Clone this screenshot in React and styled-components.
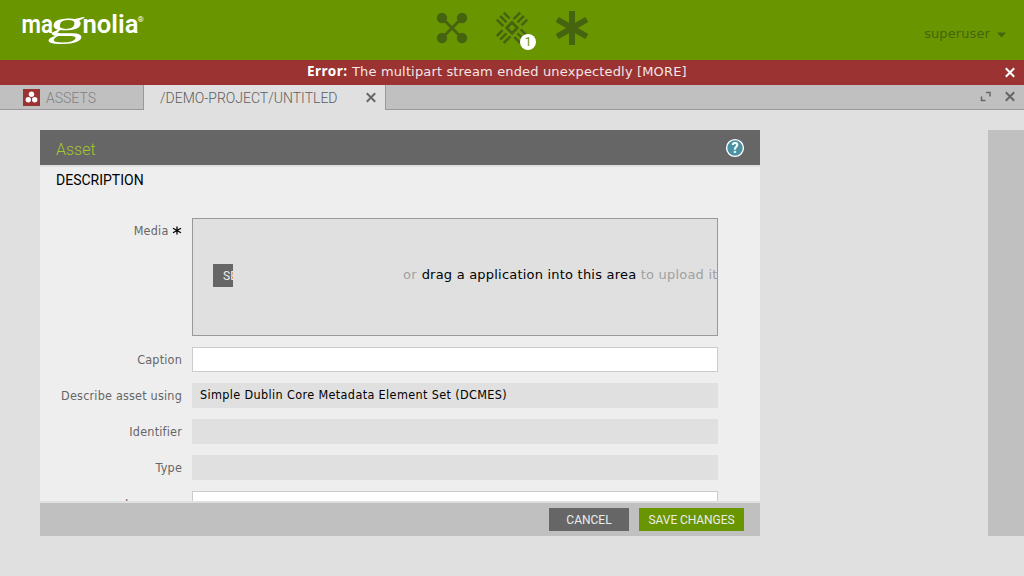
import React from "react";
import styled, { createGlobalStyle } from "styled-components";

const verdana = `"DejaVu Sans", sans-serif`;
const tahoma = `"DejaVu Sans Condensed", "DejaVu Sans", sans-serif`;
const din = `Roboto, "Liberation Sans", sans-serif`;

const GlobalStyle = createGlobalStyle`
  * { box-sizing: border-box; }
  body { margin: 0; background: #e0e0e0; overflow: hidden; }
`;

const Shell = styled.div`
  display: flex;
  flex-direction: column;
  width: 1024px;
  height: 576px;
  overflow: hidden;
  background: #e0e0e0;
  font-family: ${verdana};
`;

const Header = styled.header`
  display: grid;
  grid-template-columns: 1fr 156px 1fr;
  height: 60px;
  flex: none;
  background: #699600;
  color: #466410;
`;

const Launchers = styled.nav`
  display: flex;
  justify-content: space-between;
  padding-top: 10px;
`;

const Launcher = styled.div`
  position: relative;
  width: 36px;
  height: 36px;
  svg { display: block; }
`;

const Badge = styled.span`
  position: absolute;
  left: 26px;
  top: 24px;
  width: 16px;
  height: 16px;
  border-radius: 50%;
  background: #fff;
  color: #699600;
  font: 400 12px/16px ${din};
  text-align: center;
`;

const User = styled.div`
  display: flex;
  justify-content: flex-end;
  align-items: center;
  gap: 7px;
  padding: 8px 18px 0 0;
  svg { margin-top: 2px; }
`;

const Message = styled.div`
  display: flex;
  align-items: center;
  height: 25px;
  flex: none;
  padding: 0 9px 1px 307px;
  background: #9a3332;
  color: #f2e6e6;
  white-space: nowrap;
  > svg { margin: 0 0 0 auto; }
`;

const ErrorTag = styled.strong`
  width: 45px;
  margin-top: -2px;
  color: #fff;
  font: 700 13.5px/16px "Noto Sans", sans-serif;
  letter-spacing: 0.5px;
`;

const Line = styled.span`
  font-family: ${(p) => p.$font || verdana};
  font-size: ${(p) => p.$size}px;
  font-weight: ${(p) => p.$weight || 400};
  letter-spacing: ${(p) => p.$track || 0}px;
  line-height: 16px;
  white-space: nowrap;
`;

const Tabs = styled.div`
  display: flex;
  height: 25px;
  flex: none;
  background: #c0c0c0;
  color: #666;
`;

const Tab = styled.div`
  display: flex;
  align-items: center;
  width: ${(p) => p.$width}px;
  padding: ${(p) => (p.$active ? "1px 9px 0 16px" : "1px 0 0 23px")};
  gap: 6px;
  background: ${(p) => (p.$active ? "#e0e0e0" : "#c0c0c0")};
  color: ${(p) => (p.$active ? "#5c5c5c" : "#808080")};
  border-right: 1px solid #999;
  border-bottom: ${(p) => (p.$active ? "none" : "1px solid #999")};
  > svg:last-child { margin: -2px 0 0 auto; }
`;

const TabTools = styled.div`
  display: flex;
  flex: 1;
  align-items: center;
  justify-content: flex-end;
  gap: 13px;
  padding: 0 9px 1px 0;
  border-bottom: 1px solid #999;
`;

const Workspace = styled.main`
  display: flex;
  justify-content: space-between;
  height: 426px;
  padding: 20px 0 0 40px;
`;

const Dialog = styled.section`
  display: flex;
  flex-direction: column;
  gap: 2px;
  width: 720px;
`;

const DialogHeader = styled.div`
  display: flex;
  align-items: center;
  justify-content: space-between;
  height: 35px;
  flex: none;
  padding: 1px 15px 0 16px;
  background: #666;
  color: #a7c72c;
  > span { padding-top: 3px; }
`;

const Body = styled.div`
  flex: 1;
  min-height: 0;
  overflow: hidden;
  background: #eee;
`;

const SectionTitle = styled.h2`
  display: flex;
  margin: 0;
  height: 51px;
  padding: 5px 16px 0;
  color: #000;
`;

const Field = styled.div`
  display: flex;
  gap: 10px;
  margin-bottom: 11px;
`;

const Label = styled.label`
  display: flex;
  justify-content: flex-end;
  align-items: center;
  gap: 3.5px;
  width: 142px;
  height: 25px;
  color: #666;
`;

const Input = styled.div`
  display: flex;
  width: 526px;
  height: 25px;
  padding: ${(p) => (p.$disabled ? "4px 8px" : "3px 7px")};
  background: ${(p) => (p.$disabled ? "#e0e0e0" : "#fff")};
  border: ${(p) => (p.$disabled ? "none" : "1px solid #ccc")};
  color: #000;
`;

const DropZone = styled.div`
  display: flex;
  align-items: center;
  width: 526px;
  height: 118px;
  padding-left: 20px;
  border: 1px solid #999;
  background: #e0e0e0;
  overflow: hidden;
`;

const SelectButton = styled.div`
  display: flex;
  flex: none;
  width: 20px;
  height: 23px;
  margin: -3px 170px 0 0;
  padding: 4px 0 0 10px;
  overflow: hidden;
  background: #666;
  color: #eee;
`;

const Hint = styled.div`
  display: flex;
  margin-top: -5px;
  color: #a0a0a0;
  b { color: #000; font-weight: 400; margin-left: 0.6px; }
`;

const Footer = styled.div`
  display: flex;
  align-items: center;
  justify-content: flex-end;
  gap: 10px;
  height: 33px;
  flex: none;
  padding-right: 16px;
  background: #c0c0c0;
`;

const Button = styled.button`
  display: flex;
  align-items: center;
  justify-content: center;
  width: ${(p) => p.$width}px;
  height: 23px;
  padding: 1px 0 0;
  border: 0;
  background: ${(p) => (p.$primary ? "#699600" : "#666")};
  color: #ececec;
`;

const SidePanel = styled.aside`
  width: 36px;
  background: #c0c0c0;
`;

const Cross = ({ color }) => (
  <svg width="11" height="11" viewBox="0 0 11 11">
    <path d="M1.8 1.3l8.4 8.4M10.2 1.3L1.8 9.7" stroke={color} strokeWidth="2" />
  </svg>
);

const Logo = () => (
  <svg width="160" height="60" fill="#fff" fontFamily="Roboto, sans-serif" fontWeight="700">
    <text x="21.5" y="33" fontSize="26" fontWeight="600" textLength="31.5" lengthAdjust="spacingAndGlyphs">ma</text>
    <text transform="translate(46.5 36.3) skewX(-14) scale(1.98 1)" fontFamily="Liberation Serif, serif" fontWeight="400" fontSize="37">g</text>
    <text x="82.5" y="33" fontSize="26" fontWeight="600" textLength="56" lengthAdjust="spacingAndGlyphs">nolia</text>
    <text x="137.5" y="21.5" fontSize="8" fontWeight="400">®</text>
  </svg>
);

const AppsIcon = () => (
  <svg width="36" height="36" fill="#466410">
    <path d="M8 8l20 20M28 8L8 28" stroke="#466410" strokeWidth="3" />
    <circle cx="8" cy="8" r="5.2" />
    <circle cx="28" cy="8" r="5.2" />
    <circle cx="8" cy="28" r="5.2" />
    <circle cx="28" cy="28" r="5.2" />
  </svg>
);

const PulseIcon = () => (
  <svg width="36" height="36" fill="none" stroke="#466410">
    <path d="M18 12.4L23.4 17.8L18 23.2L12.6 17.8Z" strokeWidth="2.8" />
    {[0, 90, 180, 270].map((angle) => (
      <path
        key={angle}
        transform={`rotate(${angle} 18 17.8)`}
        d="M2.8 9.6l6.6 6.6M6.1 5.9l6.4 6.4M9.8 2.6l5.8 5.8"
        strokeWidth="2.5"
      />
    ))}
  </svg>
);

const AsteriskIcon = () => (
  <svg width="36" height="36" stroke="#466410" strokeWidth="6">
    <path d="M18 1v34M3.2 9.5l29.6 17M32.8 9.5l-29.6 17" />
  </svg>
);

const AssetsIcon = () => (
  <svg width="17" height="17">
    <path fill="#9a3332" d="M0 0h17v17H0z" />
    <g fill="#fff">
      <circle cx="8.5" cy="5.3" r="2.7" />
      <circle cx="5.3" cy="10.8" r="2.7" />
      <circle cx="11.7" cy="10.8" r="2.7" />
    </g>
  </svg>
);

const HelpIcon = () => (
  <svg width="20" height="20">
    <circle cx="10" cy="10" r="8.4" fill="#4a91a3" stroke="#fff" strokeWidth="1.4" />
    <text x="10" y="14.7" fill="#fff" fontFamily="Roboto, sans-serif" fontWeight="700" fontSize="14" textAnchor="middle">?</text>
  </svg>
);

const RequiredMark = () => (
  <svg width="10" height="10" stroke="#000" strokeWidth="1.3">
    <path d="M5 .5v8M1 2.2l8 4.6M9 2.2L1 6.8" />
  </svg>
);

const fields = [
  { label: "Caption" },
  { label: "Describe asset using", value: "Simple Dublin Core Metadata Element Set (DCMES)", disabled: true },
  { label: "Identifier", disabled: true },
  { label: "Type", disabled: true },
  { label: "Language" },
];

const FieldLabel = ({ children }) => (
  <Line $font={tahoma} $size={12.5} $track={0.2}>{children}</Line>
);

export default function App() {
  return (
    <Shell>
      <GlobalStyle />
      <Header>
        <Logo />
        <Launchers>
          <Launcher><AppsIcon /></Launcher>
          <Launcher><PulseIcon /><Badge>1</Badge></Launcher>
          <Launcher><AsteriskIcon /></Launcher>
        </Launchers>
        <User>
          <Line $size={13} $track={0.1}>superuser</Line>
          <svg width="9" height="6"><path d="M0 .5h9L4.5 5.5z" fill="#466410" /></svg>
        </User>
      </Header>
      <Message>
        <ErrorTag>Error:</ErrorTag>
        <Line $size={13} $track={0.15}>The multipart stream ended unexpectedly [MORE]</Line>
        <Cross color="#fff" />
      </Message>
      <Tabs>
        <Tab $width={144}>
          <AssetsIcon />
          <Line $font={din} $size={14} $weight={300}>ASSETS</Line>
        </Tab>
        <Tab $active $width={242}>
          <Line $font={din} $size={14} $weight={300}>/DEMO-PROJECT/UNTITLED</Line>
          <Cross color="#666" />
        </Tab>
        <TabTools>
          <svg width="11" height="11" fill="none" stroke="#666" strokeWidth="1.5">
            <path d="M6 1.5h4v4M1.5 5.5v4h4" />
          </svg>
          <Cross color="#666" />
        </TabTools>
      </Tabs>
      <Workspace>
        <Dialog>
          <DialogHeader>
            <Line $font={din} $size={16} $weight={300}>Asset</Line>
            <HelpIcon />
          </DialogHeader>
          <Body>
            <SectionTitle><Line $font={din} $size={14}>DESCRIPTION</Line></SectionTitle>
            <Field>
              <Label><FieldLabel>Media</FieldLabel><RequiredMark /></Label>
              <DropZone>
                <SelectButton><Line $font={din} $size={12}>SELECT</Line></SelectButton>
                <Hint><Line $size={13} $track={0.21}>or <b>drag a application into this area</b> to upload it</Line></Hint>
              </DropZone>
            </Field>
            {fields.map((f) => (
              <Field key={f.label}>
                <Label><FieldLabel>{f.label}</FieldLabel></Label>
                <Input $disabled={f.disabled}>
                  {f.value && <Line $font={tahoma} $size={12.5} $track={0.37}>{f.value}</Line>}
                </Input>
              </Field>
            ))}
          </Body>
          <Footer>
            <Button $width={80}><Line $font={din} $size={12}>CANCEL</Line></Button>
            <Button $primary $width={105}><Line $font={din} $size={12} $track={-0.08}>SAVE CHANGES</Line></Button>
          </Footer>
        </Dialog>
        <SidePanel />
      </Workspace>
    </Shell>
  );
}
